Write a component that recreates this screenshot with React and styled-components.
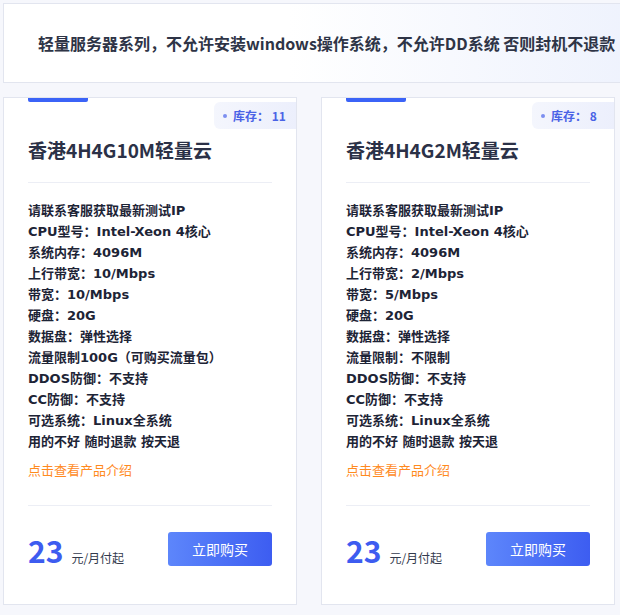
import React from "react";
import styled, { createGlobalStyle } from "styled-components";

const Global = createGlobalStyle`
  html, body { margin: 0; padding: 0; background: #f6f7fc; overflow: hidden; }
  body { font-family: "Noto Sans CJK SC", "Noto Sans", sans-serif; }
`;

const Page = styled.div`
  width: 634px;
  padding: 3px;
  display: flex;
  flex-direction: column;
  gap: 14px;
`;

const Notice = styled.div`
  height: 78px;
  border: 1px solid #e2e5ef;
  border-right: 0;
  background: linear-gradient(90deg, #ffffff 45%, #eef2fd 100%);
  display: flex;
  align-items: center;
  padding-left: 34px;
  font-size: 16px;
  font-weight: 700;
  color: #2e3446;
  white-space: nowrap;
`;

const Grid = styled.div`
  display: grid;
  grid-template-columns: 294px 294px;
  gap: 24px;
`;

const Card = styled.div`
  background: #fff;
  border: 1px solid #e2e5ef;
  height: 508px;
  padding: 0 24px;
  display: flex;
  flex-direction: column;
  box-sizing: border-box;
`;

const CardTop = styled.div`
  display: flex;
  justify-content: space-between;
  align-items: flex-start;
  margin-right: -24px;
`;

const Bar = styled.div`
  width: 60px;
  height: 4px;
  background: #3b63f7;
  border-radius: 0 0 2px 2px;
`;

const Badge = styled.div`
  margin-top: 4px;
  height: 27px;
  width: 82px;
  box-sizing: border-box;
  padding-left: 9px;
  background: linear-gradient(90deg, #f4f6fd, #eceffc);
  border-radius: 6px 0 0 6px;
  display: flex;
  align-items: center;
  gap: 6px;
  color: #4a63e6;
  font-size: 12px;
  font-weight: 700;
`;

const Dot = styled.span`
  width: 4px;
  height: 4px;
  border-radius: 50%;
  background: #7d8ff0;
`;

const Title = styled.div`
  margin-top: 7px;
  font-size: 19px;
  line-height: 28px;
  font-weight: 700;
  color: #2b3147;
`;

const Divider = styled.div`
  height: 1px;
  background: #eceef5;
  margin-top: ${(p) => p.$mt}px;
`;

const Specs = styled.div`
  margin-top: 17px;
  display: flex;
  flex-direction: column;
`;

const Spec = styled.div`
  font-family: "DejaVu Sans", "Noto Sans CJK SC", sans-serif;
  font-size: 13px;
  line-height: 21px;
  font-weight: 700;
  color: #1d2436;
  white-space: nowrap;
`;

const Link = styled.a`
  margin-top: 7px;
  font-size: 13px;
  line-height: 21px;
  color: #ff8a1e;
  text-decoration: none;
`;

const Footer = styled.div`
  margin-top: 26px;
  display: flex;
  justify-content: space-between;
  align-items: flex-end;
`;

const Price = styled.div`
  display: flex;
  align-items: baseline;
  gap: 8px;
  margin-bottom: -2px;
`;

const Amount = styled.span`
  font-size: 30px;
  line-height: 36px;
  font-weight: 700;
  color: #3d5cf0;
`;

const Unit = styled.span`
  font-size: 12px;
  color: #333a4d;
`;

const BuyButton = styled.button`
  width: 104px;
  height: 34px;
  border: 0;
  border-radius: 3px;
  background: linear-gradient(90deg, #5d86fb, #3d5df1);
  color: #fff;
  font-family: inherit;
  font-size: 14px;
  cursor: pointer;
`;

const products = [
  {
    name: "香港4H4G10M轻量云",
    stock: 11,
    specs: [
      "请联系客服获取最新测试IP",
      "CPU型号：Intel-Xeon 4核心",
      "系统内存：4096M",
      "上行带宽：10/Mbps",
      "带宽：10/Mbps",
      "硬盘：20G",
      "数据盘：弹性选择",
      "流量限制100G（可购买流量包）",
      "DDOS防御：不支持",
      "CC防御：不支持",
      "可选系统：Linux全系统",
      "用的不好 随时退款 按天退",
    ],
    price: 23,
  },
  {
    name: "香港4H4G2M轻量云",
    stock: 8,
    specs: [
      "请联系客服获取最新测试IP",
      "CPU型号：Intel-Xeon 4核心",
      "系统内存：4096M",
      "上行带宽：2/Mbps",
      "带宽：5/Mbps",
      "硬盘：20G",
      "数据盘：弹性选择",
      "流量限制：不限制",
      "DDOS防御：不支持",
      "CC防御：不支持",
      "可选系统：Linux全系统",
      "用的不好 随时退款 按天退",
    ],
    price: 23,
  },
];

export default function App() {
  return (
    <>
      <Global />
      <Page>
        <Notice>轻量服务器系列，不允许安装windows操作系统，不允许DD系统 否则封机不退款</Notice>
        <Grid>
          {products.map((p) => (
            <Card key={p.name}>
              <CardTop>
                <Bar />
                <Badge>
                  <Dot />
                  <span>库存： {p.stock}</span>
                </Badge>
              </CardTop>
              <Title>{p.name}</Title>
              <Divider $mt={18} />
              <Specs>
                {p.specs.map((s) => (
                  <Spec key={s}>{s}</Spec>
                ))}
              </Specs>
              <Link href="#">点击查看产品介绍</Link>
              <Divider $mt={25} />
              <Footer>
                <Price>
                  <Amount>{p.price}</Amount>
                  <Unit>元/月付起</Unit>
                </Price>
                <BuyButton>立即购买</BuyButton>
              </Footer>
            </Card>
          ))}
        </Grid>
      </Page>
    </>
  );
}
